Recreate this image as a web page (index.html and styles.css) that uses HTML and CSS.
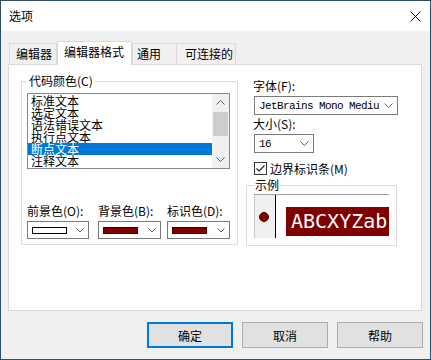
FILE: index.html
```html
<!DOCTYPE html>
<html lang="zh">
<head>
    <meta charset="UTF-8">
    <title>选项</title>
    <link rel="stylesheet" href="styles.css">
</head>
<body>

<div class="window">
    <div class="titlebar">
        <span class="title">选项</span>
        <svg class="close" width="11" height="11" viewBox="0 0 11 11">
            <path d="M0.5 0.5L10.5 10.5M10.5 0.5L0.5 10.5" stroke="#000" stroke-width="1" fill="none"/>
        </svg>
    </div>

    <div class="content">
        <div class="tabs">
            <div class="tab tab-editor">编辑器</div>
            <div class="tab active tab-format">编辑器格式</div>
            <div class="tab tab-general">通用</div>
            <div class="tab tab-connect">可连接的</div>
        </div>

        <div class="panel">
            <!-- 代码颜色 -->
            <fieldset class="group code-colors">
                <legend>代码颜色(C)</legend>
                <div class="listbox">
                    <div class="items">
                        <div class="item">标准文本</div>
                        <div class="item">选定文本</div>
                        <div class="item">语法错误文本</div>
                        <div class="item">执行点文本</div>
                        <div class="item selected">断点文本</div>
                        <div class="item">注释文本</div>
                    </div>
                    <div class="scrollbar">
                        <div class="scroll-btn">
                            <svg width="9" height="5" viewBox="0 0 9 5"><path d="M0.5 4.5L4.5 0.5L8.5 4.5" stroke="#606060" fill="none"/></svg>
                        </div>
                        <div class="track"><div class="thumb"></div></div>
                        <div class="scroll-btn">
                            <svg width="9" height="5" viewBox="0 0 9 5"><path d="M0.5 0.5L4.5 4.5L8.5 0.5" stroke="#606060" fill="none"/></svg>
                        </div>
                    </div>
                </div>

                <div class="color-row">
                    <div class="color-field">
                        <div class="label">前景色(O):</div>
                        <div class="combo color-combo">
                            <span class="swatch swatch-white"></span>
                            <svg width="8" height="5" viewBox="0 0 8 5"><path d="M0.5 0.5L4 4L7.5 0.5" stroke="#606060" fill="none"/></svg>
                        </div>
                    </div>
                    <div class="color-field">
                        <div class="label">背景色(B):</div>
                        <div class="combo color-combo">
                            <span class="swatch swatch-red"></span>
                            <svg width="8" height="5" viewBox="0 0 8 5"><path d="M0.5 0.5L4 4L7.5 0.5" stroke="#606060" fill="none"/></svg>
                        </div>
                    </div>
                    <div class="color-field">
                        <div class="label">标识色(D):</div>
                        <div class="combo color-combo">
                            <span class="swatch swatch-red"></span>
                            <svg width="8" height="5" viewBox="0 0 8 5"><path d="M0.5 0.5L4 4L7.5 0.5" stroke="#606060" fill="none"/></svg>
                        </div>
                    </div>
                </div>
            </fieldset>

            <!-- 字体、大小、示例 -->
            <div class="side">
                <div class="label">字体(F):</div>
                <div class="combo font-combo">
                    <span class="mono">JetBrains Mono Mediu</span>
                    <svg width="9" height="5" viewBox="0 0 9 5"><path d="M0.5 0.5L4.5 4.5L8.5 0.5" stroke="#606060" fill="none"/></svg>
                </div>

                <div class="label size-label">大小(S):</div>
                <div class="combo size-combo">
                    <span class="mono">16</span>
                    <svg width="9" height="5" viewBox="0 0 9 5"><path d="M0.5 0.5L4.5 4.5L8.5 0.5" stroke="#606060" fill="none"/></svg>
                </div>

                <div class="check-row">
                    <svg width="13" height="13" viewBox="0 0 13 13">
                        <rect x="0.5" y="0.5" width="12" height="12" fill="#fff" stroke="#333"/>
                        <path d="M2.5 6.5L5 9L10.5 3.5" stroke="#222" stroke-width="1.2" fill="none"/>
                    </svg>
                    <span>边界标识条(M)</span>
                </div>

                <fieldset class="group sample">
                    <legend>示例</legend>
                    <div class="preview">
                        <div class="gutter"><span class="dot"></span></div>
                        <div class="sample-text">ABCXYZab</div>
                    </div>
                </fieldset>
            </div>
        </div>

        <div class="buttons">
            <button class="button default">确定</button>
            <button class="button">取消</button>
            <button class="button">帮助</button>
        </div>
    </div>
</div>

</body>
</html>
```

FILE: styles.css
```css
* {
    box-sizing: border-box;
}

body {
    margin: 0;
    font-family: "Noto Sans CJK SC", sans-serif;
    font-size: 12px;
    color: #000;
    background: #fff;
}

.window {
    width: 431px;
    height: 360px;
    border: 1px solid #2c4f6e;
    background: #f0f0f0;
    display: flex;
    flex-direction: column;
}

.titlebar {
    flex: none;
    height: 30px;
    background: #fff;
    display: flex;
    align-items: center;
    justify-content: space-between;
    padding: 0 9px 0 8px;
}

.title {
    line-height: 14px;
}

.content {
    padding: 10px 8px 0 7px;
}

/* Pestañas */
.tabs {
    display: flex;
    align-items: flex-end;
    height: 23px;
    margin-left: 1px;
}

.tab {
    height: 21px;
    border: 1px solid #d9d9d9;
    border-bottom: none;
    background: #f0f0f0;
    line-height: 19px;
    white-space: nowrap;
}

.tab-editor {
    width: 48px;
    padding-left: 6px;
}

.tab.active {
    width: 75px;
    height: 24px;
    margin-bottom: -1px;
    background: #fff;
    padding-left: 6px;
    line-height: 20px;
    position: relative;
    z-index: 1;
}

.tab-general {
    width: 45px;
    padding-left: 4px;
}

.tab-connect {
    width: 60px;
    margin-left: -1px;
    padding-left: 8px;
}

.panel {
    height: 247px;
    background: #fff;
    border: 1px solid #d9d9d9;
    display: flex;
    align-items: flex-start;
    padding: 9px 0 0 12px;
}

/* Group boxes */
.group {
    margin: 0;
    min-width: 0;
    border: 1px solid #dcdcdc;
}

.group legend {
    line-height: 14px;
    padding: 0 2px;
}

.code-colors {
    width: 217px;
    padding: 5px 7px 5px 5px;
}

.listbox {
    height: 76px;
    border: 1px solid #828790;
    display: flex;
}

.items {
    flex: 1;
    padding-top: 1px;
    overflow: hidden;
}

.item {
    height: 12px;
    line-height: 12px;
    padding-left: 3px;
    overflow: hidden;
    white-space: nowrap;
}

.item.selected {
    background: #0078d7;
    color: #fff;
}

.scrollbar {
    width: 17px;
    background: #f0f0f0;
    display: flex;
    flex-direction: column;
}

.scroll-btn {
    height: 17px;
    display: flex;
    align-items: center;
    justify-content: center;
}

.track {
    flex: 1;
    padding-top: 1px;
}

.thumb {
    height: 24px;
    margin: 0 1px;
    background: #cdcdcd;
}

.color-row {
    display: grid;
    grid-template-columns: 71px 69px 63px;
    margin-top: 35px;
}

.label {
    line-height: 14px;
    white-space: nowrap;
}

.combo {
    display: flex;
    align-items: center;
    justify-content: space-between;
    border: 1px solid #7a7a7a;
    background: #fff;
    padding: 0 4px 0 4px;
    height: 19px;
}

.color-combo {
    margin-top: 3px;
    height: 18px;
    width: 63px;
}

.color-field:first-child .color-combo {
    width: 62px;
}

.swatch {
    width: 35px;
    height: 7px;
    border: 1px solid #000;
}

.swatch-white {
    background: #fff;
}

.swatch-red {
    background: #800000;
    border-color: #3a0000;
}

/* Columna derecha */
.side {
    width: 151px;
    margin-left: 8px;
    padding-top: 5px;
}

.side > .label,
.side > .combo,
.side > .check-row {
    margin-left: 8px;
}

.side > .label {
    margin-left: 7px;
}

.font-combo {
    width: 144px;
    margin-top: 3px;
}

.mono {
    font-family: "Liberation Mono", monospace;
    font-size: 11px;
    letter-spacing: -0.6px;
    white-space: nowrap;
    overflow: hidden;
}

.size-label {
    margin-top: 2px;
}

.size-combo {
    width: 60px;
    margin-top: 3px;
}

.check-row {
    display: flex;
    align-items: center;
    gap: 3px;
    height: 14px;
    margin-top: 8px;
}

.sample {
    margin-top: 3px;
    width: 151px;
    padding: 2px 7px 7px 7px;
}

.sample legend {
    padding: 0 1px;
}

.preview {
    height: 44px;
    border-top: 1px solid #a0a0a0;
    display: flex;
    align-items: flex-start;
    overflow: hidden;
}

.gutter {
    flex: none;
    width: 22px;
    height: 43px;
    background: #f0f0f0;
    border-left: 1px solid #c8c8c8;
    border-right: 1px solid #000;
    display: flex;
    align-items: center;
    padding-left: 4px;
}

.dot {
    width: 10px;
    height: 10px;
    border-radius: 50%;
    background: #800000;
    border: 1px solid #4a0000;
}

.sample-text {
    flex: none;
    margin: 12px 0 0 10px;
    height: 29px;
    padding: 0 10px 0 5px;
    background: #800000;
    color: #fff;
    font-family: "DejaVu Sans Mono", monospace;
    font-size: 20px;
    line-height: 29px;
    white-space: nowrap;
}

/* Botones */
.buttons {
    display: flex;
    justify-content: flex-end;
    gap: 9px;
    margin: 11px -1px 0 0;
}

.button {
    width: 86px;
    height: 26px;
    background: #e1e1e1;
    border: 1px solid #adadad;
    font-family: inherit;
    font-size: 12px;
    color: #000;
    padding: 0;
}

.button.default {
    border-color: #0078d7;
    box-shadow: inset 0 0 0 1px #0078d7;
}
```
